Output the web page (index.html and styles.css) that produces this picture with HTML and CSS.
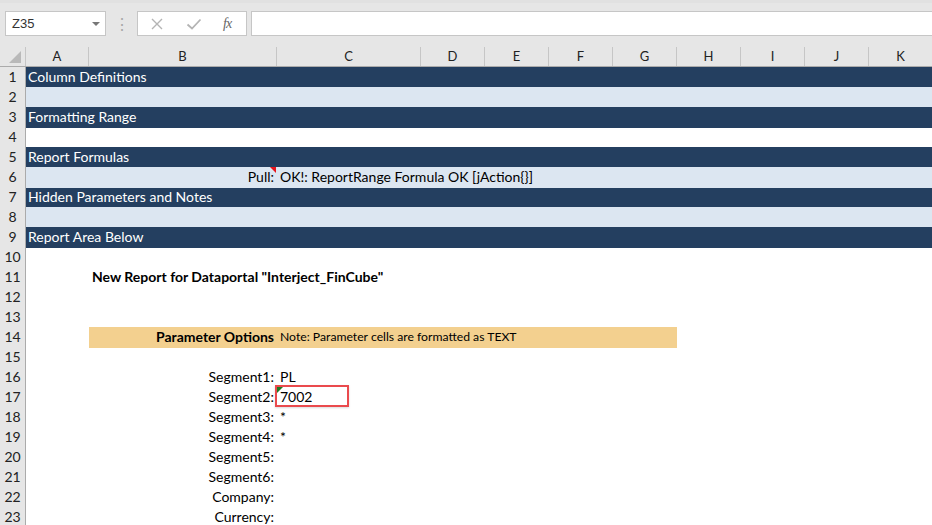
FILE: index.html
```html
<!DOCTYPE html>
<html>
<head>
<meta charset="utf-8">
<link rel="stylesheet" href="styles.css">
</head>
<body>
<div class="app">
  <div class="toolbar">
    <div class="namebox"><span class="nb-text">Z35</span><span class="caret"></span></div>
    <div class="dots">⋮</div>
    <div class="fxbox">
      <svg class="ico" width="14" height="14" viewBox="0 0 14 14"><path d="M2 2 L12 12 M12 2 L2 12" stroke="#b4b4b4" stroke-width="1.4" fill="none"/></svg>
      <svg class="ico" width="16" height="14" viewBox="0 0 16 14"><path d="M1.5 7.5 L6 11.5 L14.5 2.5" stroke="#b4b4b4" stroke-width="1.8" fill="none"/></svg>
      <span class="fx">fx</span>
    </div>
    <div class="formula"></div>
  </div>
  <div class="sheet">
    <div class="row head">
      <div class="corner"><span class="tri"></span></div>
      <div class="ch">A</div><div class="ch">B</div><div class="ch">C</div><div class="ch">D</div><div class="ch">E</div><div class="ch">F</div><div class="ch">G</div><div class="ch">H</div><div class="ch">I</div><div class="ch">J</div><div class="ch">K</div>
    </div>
    <div class="row"><div class="rh">1</div><div class="band dark">Column Definitions</div></div>
    <div class="row"><div class="rh">2</div><div class="band light"></div></div>
    <div class="row"><div class="rh">3</div><div class="band dark">Formatting Range</div></div>
    <div class="row"><div class="rh">4</div><div class="band"></div></div>
    <div class="row"><div class="rh">5</div><div class="band dark">Report Formulas</div></div>
    <div class="row light-row">
      <div class="rh">6</div><div class="c a"></div>
      <div class="c b right note-cell">Pull:<span class="comment"></span></div>
      <div class="c rest">OK!: ReportRange Formula OK [jAction{}]</div>
    </div>
    <div class="row"><div class="rh">7</div><div class="band dark">Hidden Parameters and Notes</div></div>
    <div class="row"><div class="rh">8</div><div class="band light"></div></div>
    <div class="row"><div class="rh">9</div><div class="band dark">Report Area Below</div></div>
    <div class="row"><div class="rh">10</div></div>
    <div class="row"><div class="rh">11</div><div class="c a"></div><div class="c rest2 bold">New Report for Dataportal "Interject_FinCube"</div></div>
    <div class="row"><div class="rh">12</div></div>
    <div class="row"><div class="rh">13</div></div>
    <div class="row"><div class="rh">14</div><div class="c a"></div>
      <div class="c b right bold tan">Parameter Options</div>
      <div class="c tanspan small">Note: Parameter cells are formatted as TEXT</div>
    </div>
    <div class="row"><div class="rh">15</div></div>
    <div class="row"><div class="rh">16</div><div class="c a"></div><div class="c b right">Segment1:</div><div class="c rest">PL</div></div>
    <div class="row"><div class="rh">17</div><div class="c a"></div><div class="c b right">Segment2:</div><div class="c rest sel"><span class="err"></span>7002<span class="hl"></span></div></div>
    <div class="row"><div class="rh">18</div><div class="c a"></div><div class="c b right">Segment3:</div><div class="c rest">*</div></div>
    <div class="row"><div class="rh">19</div><div class="c a"></div><div class="c b right">Segment4:</div><div class="c rest">*</div></div>
    <div class="row"><div class="rh">20</div><div class="c a"></div><div class="c b right">Segment5:</div></div>
    <div class="row"><div class="rh">21</div><div class="c a"></div><div class="c b right">Segment6:</div></div>
    <div class="row"><div class="rh">22</div><div class="c a"></div><div class="c b right">Company:</div></div>
    <div class="row"><div class="rh">23</div><div class="c a"></div><div class="c b right">Currency:</div></div>
  </div>
</div>
</body>
</html>
```
FILE: styles.css
```css
html, body {
  margin: 0;
  padding: 0;
  background: #ffffff;
  overflow: hidden;
}
.app {
  width: 932px;
  height: 525px;
  overflow: hidden;
  font-family: Lato, "Liberation Sans", sans-serif;
}
.toolbar {
  height: 47px;
  background: #e6e6e6;
  border-top: 3px solid #e1e1e1;
  box-sizing: border-box;
  display: flex;
  align-items: flex-start;
  padding-top: 8px;
  padding-left: 5px;
}
.namebox {
  width: 101px;
  height: 25px;
  box-sizing: border-box;
  background: #fff;
  border: 1px solid #c6c6c6;
  display: flex;
  align-items: center;
  justify-content: space-between;
  padding: 0 5px 0 6px;
  font-family: "Liberation Sans", Arial, sans-serif;
  font-size: 13px;
  color: #333;
}
.caret {
  width: 0;
  height: 0;
  border-left: 4px solid transparent;
  border-right: 4px solid transparent;
  border-top: 4px solid #777;
}
.dots {
  width: 31px;
  text-align: center;
  color: #a8a8a8;
  font-size: 16px;
  line-height: 25px;
}
.fxbox {
  width: 110px;
  height: 25px;
  box-sizing: border-box;
  background: #fff;
  border: 1px solid #c6c6c6;
  display: flex;
  align-items: center;
  padding-left: 12px;
  gap: 22px;
}
.fx {
  font-family: "Liberation Serif", serif;
  font-style: italic;
  font-size: 14px;
  color: #666;
  margin-left: -1px;
  letter-spacing: -1px;
}
.formula {
  margin-left: 4px;
  flex: 1;
  height: 25px;
  box-sizing: border-box;
  background: #fff;
  border: 1px solid #c6c6c6;
  border-right: none;
}
.sheet {
  display: flex;
  flex-direction: column;
}
.row {
  display: grid;
  grid-template-columns: 26px 63px 188px 144px repeat(8, 64px);
  height: 20px;
  font-size: 14px;
  line-height: 20px;
  color: #000;
}
.row.head {
  background: #e6e6e6;
  border-bottom: 1px solid #ababab;
  box-sizing: border-box;
  font-size: 13px;
  color: #222;
}
.corner {
  border-right: 1px solid #c6c6c6;
  box-sizing: border-box;
  position: relative;
}
.tri {
  position: absolute;
  right: 4px;
  bottom: 3px;
  width: 0;
  height: 0;
  border-left: 12px solid transparent;
  border-bottom: 12px solid #b9b9b9;
}
.ch {
  text-align: center;
  border-right: 1px solid #c6c6c6;
  box-sizing: border-box;
  line-height: 19px;
}
.rh {
  background: #e6e6e6;
  border-right: 1px solid #ababab;
  border-bottom: 1px solid #c6c6c6;
  box-sizing: border-box;
  text-align: center;
  font-size: 14px;
  line-height: 20px;
  color: #222;
}
.band {
  grid-column: 2 / -1;
  padding-left: 2px;
  white-space: nowrap;
}
.band.dark {
  background: #243f60;
  color: #ffffff;
}
.band.light, .light-row .c {
  background: #dce6f1;
}
.c {
  white-space: nowrap;
  overflow: visible;
  position: relative;
}
.c.a { grid-column: 2; }
.c.b { grid-column: 3; padding-right: 3px; }
.c.right { text-align: right; }
.c.rest { grid-column: 4 / -1; padding-left: 3px; }
.c.rest2 { grid-column: 3 / -1; padding-left: 3px; }
.bold { font-weight: 700; }
.tan, .tanspan { background: #f3d08f; }
.tanspan { grid-column: 4 / 9; padding-left: 3px; }
.small { font-size: 12.2px; }
.comment {
  position: absolute;
  right: 1px;
  top: 0;
  width: 0;
  height: 0;
  border-left: 6px solid transparent;
  border-top: 6px solid #e8141b;
}
.err {
  position: absolute;
  left: 0;
  top: 0;
  width: 0;
  height: 0;
  border-right: 6px solid transparent;
  border-top: 6px solid #1e7b22;
}
.hl {
  position: absolute;
  left: -2px;
  top: -2px;
  width: 74px;
  height: 22px;
  box-sizing: border-box;
  border: 2px solid #ea4a4d;
  box-shadow: 0 1px 2px rgba(0,0,0,0.15);
}
```
